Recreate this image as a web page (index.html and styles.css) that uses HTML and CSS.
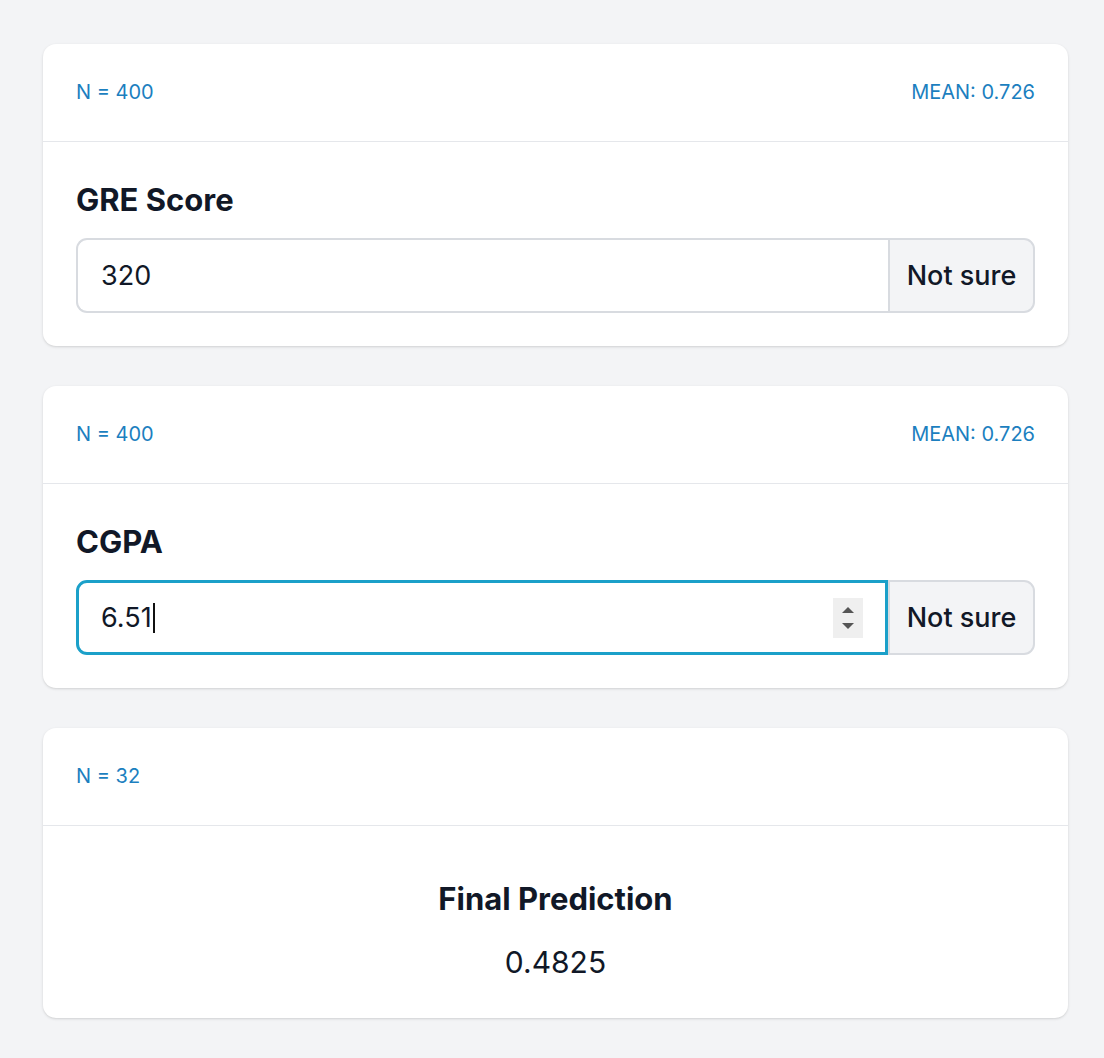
FILE: index.html
```html
<!DOCTYPE html>
<html lang="en">
<head>
<meta charset="utf-8">
<title>Prediction</title>
<link rel="stylesheet" href="styles.css">
</head>
<body>
<main class="stack">
  <section class="card">
    <header class="card-head">
      <span>N = 400</span>
      <span>MEAN: 0.726</span>
    </header>
    <div class="card-body">
      <label class="field-label" for="gre">GRE Score</label>
      <div class="group">
        <div class="field">
          <input id="gre" class="field-input" type="text" value="320">
        </div>
        <button class="btn" type="button">Not sure</button>
      </div>
    </div>
  </section>

  <section class="card">
    <header class="card-head">
      <span>N = 400</span>
      <span>MEAN: 0.726</span>
    </header>
    <div class="card-body">
      <label class="field-label" for="cgpa">CGPA</label>
      <div class="group">
        <div class="field field-focus">
          <span class="field-text" id="cgpa">6.51</span><span class="caret"></span>
          <span class="spinner">
            <svg width="14" height="26" viewBox="0 0 14 26"><path d="M1 8 L7 2 L13 8 Z" fill="#555"/><path d="M1 18 L13 18 L7 24 Z" fill="#555"/></svg>
          </span>
        </div>
        <button class="btn" type="button">Not sure</button>
      </div>
    </div>
  </section>

  <section class="card">
    <header class="card-head">
      <span>N = 32</span>
    </header>
    <div class="card-body result">
      <h2 class="result-title">Final Prediction</h2>
      <p class="result-value">0.4825</p>
    </div>
  </section>
</main>
</body>
</html>
```

FILE: styles.css
```css
* { box-sizing: border-box; }

html, body {
  margin: 0;
  background: #f3f4f6;
}

body {
  font-family: Inter, "Noto Sans", "Liberation Sans", sans-serif;
  color: #111827;
  padding: 44px 36px 40px 43px;
}

.stack {
  display: flex;
  flex-direction: column;
  gap: 40px;
}

.card {
  background: #ffffff;
  border-radius: 13px;
  box-shadow: 0 1px 3px rgba(0,0,0,0.12), 0 1px 2px -1px rgba(0,0,0,0.1);
  overflow: hidden;
}

.card-head {
  display: flex;
  justify-content: space-between;
  align-items: center;
  height: 98px;
  padding: 0 33px 1px;
  border-bottom: 1px solid #e5e7eb;
  font-size: 20px;
  line-height: 28px;
  color: #1c7fbf;
}

.card-body {
  padding: 40px 33px 33px 33px;
}

.field-label {
  display: block;
  font-size: 31px;
  line-height: 36px;
  font-weight: 700;
  color: #111827;
  margin-bottom: 20px;
}

.group {
  display: flex;
  height: 75px;
}

.field {
  flex: 1;
  display: flex;
  align-items: center;
  border: 2px solid #d8dbe0;
  border-right: none;
  border-radius: 11px 0 0 11px;
  padding: 0 22px 0 23px;
  background: #fff;
}

.field-input {
  flex: 1;
  border: none;
  outline: none;
  background: transparent;
  font-family: inherit;
  font-size: 27px;
  color: #111827;
  padding: 0;
  margin: 0;
}

.field-focus {
  border: 3px solid #1ba0c9;
  padding-left: 22px;
}

.field-text {
  font-size: 27px;
  color: #111827;
}

.caret {
  width: 2px;
  height: 30px;
  background: #111;
  margin-left: 1px;
}

.spinner {
  margin-left: auto;
  width: 30px;
  height: 40px;
  background: #efefef;
  display: flex;
  align-items: center;
  justify-content: center;
}

.btn {
  width: 147px;
  border: 2px solid #d8dbe0;
  border-radius: 0 11px 11px 0;
  background: #f3f4f6;
  font-family: inherit;
  font-size: 27px;
  font-weight: 500;
  color: #111827;
  padding: 0;
  cursor: pointer;
}

.result {
  display: flex;
  flex-direction: column;
  align-items: center;
  gap: 25px;
  padding: 55px 33px 36px;
}

.result-title {
  margin: 0;
  font-size: 31px;
  line-height: 36px;
  font-weight: 700;
}

.result-value {
  margin: 0;
  font-size: 30px;
  line-height: 40px;
}
```
